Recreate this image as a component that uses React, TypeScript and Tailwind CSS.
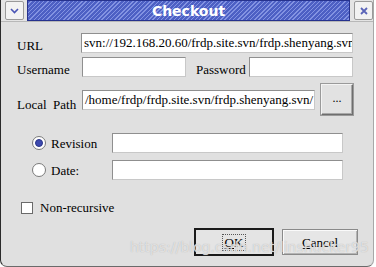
import { useState } from 'react'

function Field({ value = '', width }: { value?: string; width: string }) {
  return (
    <div
      className={`${width} h-[20px] bg-white border border-[#8f8f8f] border-r-[#c8c8c8] border-b-[#c8c8c8] overflow-hidden whitespace-nowrap pl-[2px] text-[13px] leading-[18px] text-black`}
    >
      {value}
    </div>
  )
}

function Radio({ checked }: { checked: boolean }) {
  return (
    <span className="w-[14px] h-[14px] rounded-full border border-[#7a7a7a] bg-white flex items-center justify-center shrink-0">
      {checked && <span className="w-[8px] h-[8px] rounded-full bg-[#3d4ab0] border border-[#2a3488]" />}
    </span>
  )
}

export default function App() {
  const [mode, setMode] = useState('revision')

  return (
    <div className="w-[376px] h-[267px] bg-white relative overflow-hidden [font-family:'Liberation_Serif',serif] text-[13px] text-black">
      <div className="w-[374px] h-[267px] bg-[#e0e0e0] border-l border-[#2b2b2b] border-r border-r-[#a8a8a8] border-b border-b-[#6a6a6a] rounded-b-[7px] flex flex-col">
        {/* Title bar */}
        <div className="h-[22px] flex items-start border-b border-[#b8b8b8] bg-[#e4e4e4]">
          <div className="ml-[4px] mt-[1px] w-[19px] h-[19px] border border-[#9a9a9a] rounded-[2px] bg-[#f2f2f2] flex items-center justify-center">
            <svg width="9" height="6" viewBox="0 0 9 6">
              <path d="M1 1 L4.5 4.5 L8 1" stroke="#4a55b5" strokeWidth="1.6" fill="none" />
            </svg>
          </div>
          <div className="ml-[3px] w-[323px] h-[21px] border border-[#26328e] bg-[repeating-linear-gradient(135deg,#4d60c4_0px,#4d60c4_2px,#8393e2_2px,#8393e2_3px)] flex items-center justify-center">
            <span className="[font-family:'DejaVu_Sans',sans-serif] font-bold text-[14px] text-white leading-none">Checkout</span>
          </div>
          <div className="ml-[4px] mt-[1px] w-[19px] h-[19px] border border-[#9a9a9a] rounded-[2px] bg-[#f2f2f2] flex items-center justify-center">
            <svg width="8" height="8" viewBox="0 0 8 8">
              <path d="M1 1 L7 7 M7 1 L1 7" stroke="#5a64b8" strokeWidth="1.8" />
            </svg>
          </div>
        </div>

        {/* Body */}
        <div className="flex flex-col pl-[16px] pt-[11px]">
          <div className="flex items-end">
            <span className="w-[64px] leading-[15px]">URL</span>
            <Field width="w-[272px]" value="svn://192.168.20.60/frdp.site.svn/frdp.shenyang.svn" />
          </div>

          <div className="flex items-end mt-[4px]">
            <span className="w-[65px] leading-[15px]">Username</span>
            <Field width="w-[104px]" />
            <span className="ml-[10px] w-[53px] leading-[15px]">Password</span>
            <Field width="w-[104px]" />
          </div>

          <div className="flex items-center mt-[7px]">
            <span className="w-[65px] leading-[15px] mt-[9px]">Local&nbsp; Path</span>
            <Field width="w-[233px]" value="/home/frdp/frdp.site.svn/frdp.shenyang.svn/" />
            <button className="ml-[6px] w-[32px] h-[31px] border border-[#6e6e6e] border-t-[#f4f4f4] border-l-[#f4f4f4] bg-[#e2e2e2] shadow-[inset_-1px_-1px_0_#a8a8a8,0_0_0_1px_#9a9a9a] text-[12px] leading-none pb-[4px]">
              ...
            </button>
          </div>

          <div className="flex flex-col pl-[15px] mt-[18px]">
            <div className="flex items-center">
              <label className="w-[80px] flex items-center gap-[5px]" onClick={() => setMode('revision')}>
                <Radio checked={mode === 'revision'} />
                <span className="leading-[15px]">Revision</span>
              </label>
              <Field width="w-[231px]" />
            </div>
            <div className="flex items-center mt-[7px]">
              <label className="w-[80px] flex items-center gap-[5px]" onClick={() => setMode('date')}>
                <Radio checked={mode === 'date'} />
                <span className="leading-[15px]">Date:</span>
              </label>
              <Field width="w-[231px]" />
            </div>
          </div>

          <div className="flex items-center mt-[20px] pl-[4px] gap-[7px]">
            <span className="w-[12px] h-[12px] border border-[#6a6a6a] bg-white" />
            <span className="leading-[15px]">Non-recursive</span>
          </div>

          <div className="flex items-center justify-end pr-[15px] mt-[13px] gap-[8px]">
            <button className="w-[80px] h-[28px] border-2 border-[#1a1a1a] bg-[#e4e4e4] flex items-center justify-center">
              <span className="px-[2px] border border-dotted border-[#555] leading-[15px]">
                <span className="underline">O</span>K
              </span>
            </button>
            <button className="w-[76px] h-[26px] border border-[#8a8a8a] bg-[#e6e6e6] shadow-[inset_1px_1px_0_#fafafa,inset_-1px_-1px_0_#b4b4b4] flex items-center justify-center">
              <span className="leading-[15px]">
                <span className="underline">C</span>ancel
              </span>
            </button>
          </div>
        </div>
      </div>

      {/* watermark */}
      <div className="absolute left-[130px] top-[237px] [font-family:'DejaVu_Sans',sans-serif] text-[14px] text-white/60 [text-shadow:0_0_1px_#a8a8a8] pointer-events-none whitespace-nowrap">
        https://blog.csdn.net/linshucker95
      </div>
    </div>
  )
}
